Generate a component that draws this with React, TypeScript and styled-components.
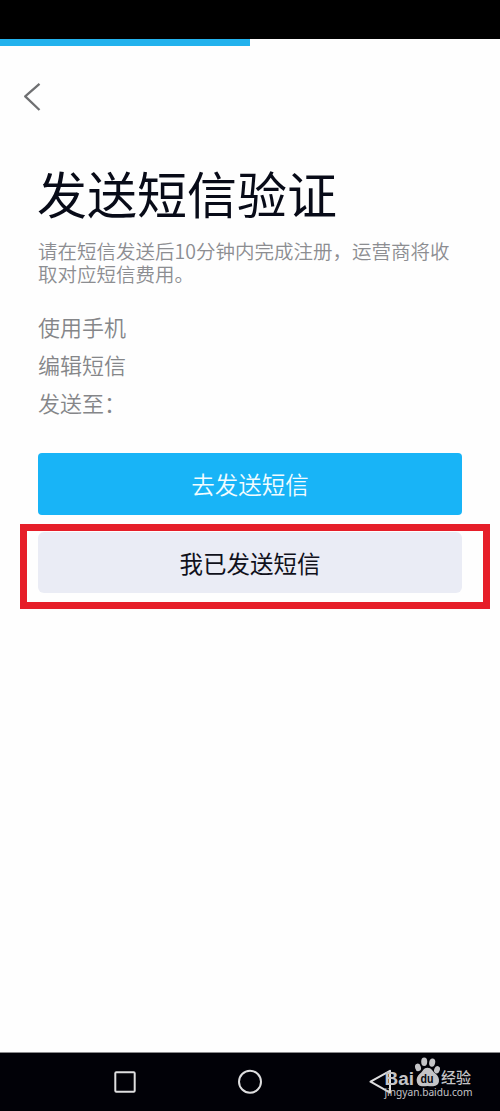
import React from "react";
import styled, { createGlobalStyle } from "styled-components";

const GlobalStyle = createGlobalStyle`
  * { box-sizing: border-box; }
  body { margin: 0; background: #fefefe; font-family: "Noto Sans CJK SC", "Noto Sans", sans-serif; }
`;

const Screen = styled.div`
  width: 500px;
  height: 1111px;
  display: flex;
  flex-direction: column;
  background: #fefefe;
  overflow: hidden;
`;

const StatusBar = styled.div`
  height: 39px;
  flex: none;
  background: #000;
`;

const Progress = styled.div`
  height: 7px;
  flex: none;
  width: 50%;
  background: #23b2ed;
`;

const Header = styled.header`
  height: 102px;
  flex: none;
  padding: 36px 0 0 22px;
`;

const BackButton = styled.button`
  display: block;
  border: 0;
  padding: 0;
  background: none;
  svg { display: block; }
`;

const Content = styled.main`
  flex: 1;
  display: flex;
  flex-direction: column;
  padding: 14px 38px 0;
`;

const Title = styled.h1`
  margin: 0 0 0 -1px;
  font-size: 50px;
  line-height: 60px;
  font-weight: 400;
  color: #080b18;
  white-space: nowrap;
`;

const Description = styled.p`
  margin: 17px 0 0;
  font-size: 19.5px;
  line-height: 23px;
  font-weight: 350;
  color: #8c8d91;
  white-space: nowrap;
`;

const Details = styled.ul`
  list-style: none;
  margin: 22px 0 0;
  padding: 0;
`;

const Detail = styled.li`
  font-size: 22px;
  line-height: 38px;
  font-weight: 350;
  color: #858689;
`;

const ActionButton = styled.button<{ $primary?: boolean }>`
  display: flex;
  align-items: center;
  justify-content: center;
  width: 100%;
  height: ${(p) => (p.$primary ? 62 : 61)}px;
  flex: none;
  border: 0;
  border-radius: ${(p) => (p.$primary ? 4 : 6)}px;
  padding: 0;
  font: ${(p) => (p.$primary ? 350 : 400)} 23.5px/34px "Noto Sans CJK SC", sans-serif;
  color: ${(p) => (p.$primary ? "#f2fcff" : "#10111b")};
  background: ${(p) => (p.$primary ? "#18b4f7" : "#eaecf5")};
`;

const Actions = styled.div`
  display: flex;
  flex-direction: column;
  margin-top: 32px;
`;

const Highlight = styled.div`
  margin: 9px -28px 0 -18px;
  height: 85px;
  border: 7px solid #e61e29;
  padding: 1px 21px 0 11px;
`;

const NavBar = styled.nav`
  height: 59px;
  flex: none;
  background: #010107;
  border-top: 1px solid #8a8a8c;
  svg { display: block; }
`;

export default function App() {
  return (
    <>
      <GlobalStyle />
      <Screen>
        <StatusBar />
        <Progress />
        <Header>
          <BackButton aria-label="返回">
            <svg width="22" height="30" viewBox="0 0 22 30" fill="none" stroke="#6f7072" strokeWidth="2.3">
              <path d="M17.5 1.8 L3.2 14.4 L17.5 28" strokeLinejoin="round" />
            </svg>
          </BackButton>
        </Header>
        <Content>
          <Title>发送短信验证</Title>
          <Description>
            请在短信发送后10分钟内完成注册，运营商将收
            <br />
            取对应短信费用。
          </Description>
          <Details>
            <Detail>使用手机</Detail>
            <Detail>编辑短信</Detail>
            <Detail>发送至：</Detail>
          </Details>
          <Actions>
            <ActionButton $primary>去发送短信</ActionButton>
            <Highlight>
              <ActionButton>我已发送短信</ActionButton>
            </Highlight>
          </Actions>
        </Content>
        <NavBar>
          <svg width="500" height="58" viewBox="0 1053 500 58">
            <g fill="none" stroke="#dededf" strokeWidth="2">
              <rect x="115.3" y="1072.3" width="19.4" height="19.4" rx="1" />
              <circle cx="250" cy="1081.7" r="11" />
              <path d="M390 1070.8 L370.5 1081.7 L390 1092.6 Z" strokeLinejoin="round" />
            </g>
            <g fill="#c4c4c7">
              <text x="384.5" y="1084.5" fontFamily="Liberation Sans" fontWeight="700" fontSize="18" textLength="29.5" lengthAdjust="spacingAndGlyphs">Bai</text>
              <ellipse cx="418" cy="1067.4" rx="2.9" ry="3.8" transform="rotate(-15 418 1067.4)" />
              <ellipse cx="424.2" cy="1061.8" rx="3" ry="4.2" />
              <ellipse cx="432.2" cy="1062.6" rx="3" ry="4.2" transform="rotate(10 432.2 1062.6)" />
              <ellipse cx="437" cy="1069.8" rx="2.8" ry="3.7" transform="rotate(20 437 1069.8)" />
              <path d="M427.5 1067.8 C423.5 1067.8 423 1071.4 420 1073.6 C417 1076 416.3 1079 416.8 1081.5 C417.8 1086.8 421.5 1086.6 427.5 1086 C433 1086.6 437.8 1086.8 438.9 1081.8 C439.5 1078.5 438 1076 435.4 1073.6 C432.5 1071.4 431.5 1067.8 427.5 1067.8 Z" />
              <text x="441" y="1083.3" fontFamily="Noto Sans CJK SC" fontWeight="500" fontSize="15">经验</text>
              <text x="384.5" y="1096.2" fontFamily="Noto Sans" fontSize="10" textLength="88" lengthAdjust="spacingAndGlyphs">jingyan.baidu.com</text>
            </g>
            <text x="420.6" y="1083" fill="#08080d" fontFamily="Liberation Sans" fontWeight="700" fontSize="12.5" textLength="13" lengthAdjust="spacingAndGlyphs">du</text>
          </svg>
        </NavBar>
      </Screen>
    </>
  );
}
